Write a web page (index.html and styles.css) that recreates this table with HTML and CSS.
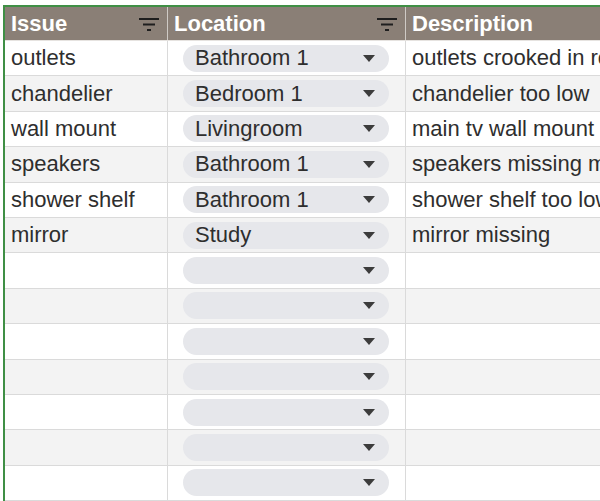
FILE: index.html
```html
<!DOCTYPE html>
<html>
<head>
<meta charset="utf-8">
<link rel="stylesheet" href="styles.css">
</head>
<body>
<div class="frame">
  <div class="sheet">
    <div class="row head">
      <div class="cell c1"><span>Issue</span>
        <svg class="filter" width="20" height="14" viewBox="0 0 20 14"><rect x="0" y="0" width="20" height="2"/><rect x="4" y="5.5" width="12" height="2"/><rect x="8" y="11" width="4" height="2"/></svg>
      </div>
      <div class="cell c2"><span>Location</span>
        <svg class="filter" width="20" height="14" viewBox="0 0 20 14"><rect x="0" y="0" width="20" height="2"/><rect x="4" y="5.5" width="12" height="2"/><rect x="8" y="11" width="4" height="2"/></svg>
      </div>
      <div class="cell c3"><span>Description</span></div>
    </div>

    <div class="row"><div class="cell c1">outlets</div><div class="cell c2"><div class="pill"><span>Bathroom 1</span><i class="arrow"></i></div></div><div class="cell c3">outlets crooked in restroom</div></div>
    <div class="row alt"><div class="cell c1">chandelier</div><div class="cell c2"><div class="pill"><span>Bedroom 1</span><i class="arrow"></i></div></div><div class="cell c3">chandelier too low</div></div>
    <div class="row"><div class="cell c1">wall mount</div><div class="cell c2"><div class="pill"><span>Livingroom</span><i class="arrow"></i></div></div><div class="cell c3">main tv wall mount</div></div>
    <div class="row alt"><div class="cell c1">speakers</div><div class="cell c2"><div class="pill"><span>Bathroom 1</span><i class="arrow"></i></div></div><div class="cell c3">speakers missing mount</div></div>
    <div class="row"><div class="cell c1">shower shelf</div><div class="cell c2"><div class="pill"><span>Bathroom 1</span><i class="arrow"></i></div></div><div class="cell c3">shower shelf too low</div></div>
    <div class="row alt"><div class="cell c1">mirror</div><div class="cell c2"><div class="pill"><span>Study</span><i class="arrow"></i></div></div><div class="cell c3">mirror missing</div></div>
    <div class="row"><div class="cell c1"></div><div class="cell c2"><div class="pill"><span></span><i class="arrow"></i></div></div><div class="cell c3"></div></div>
    <div class="row alt"><div class="cell c1"></div><div class="cell c2"><div class="pill"><span></span><i class="arrow"></i></div></div><div class="cell c3"></div></div>
    <div class="row"><div class="cell c1"></div><div class="cell c2"><div class="pill"><span></span><i class="arrow"></i></div></div><div class="cell c3"></div></div>
    <div class="row alt"><div class="cell c1"></div><div class="cell c2"><div class="pill"><span></span><i class="arrow"></i></div></div><div class="cell c3"></div></div>
    <div class="row"><div class="cell c1"></div><div class="cell c2"><div class="pill"><span></span><i class="arrow"></i></div></div><div class="cell c3"></div></div>
    <div class="row alt"><div class="cell c1"></div><div class="cell c2"><div class="pill"><span></span><i class="arrow"></i></div></div><div class="cell c3"></div></div>
    <div class="row"><div class="cell c1"></div><div class="cell c2"><div class="pill"><span></span><i class="arrow"></i></div></div><div class="cell c3"></div></div>
  </div>
</div>
</body>
</html>
```

FILE: styles.css
```css
html, body {
  margin: 0;
  padding: 0;
  background: #ffffff;
  overflow: hidden;
}
.frame {
  width: 600px;
  height: 501px;
  padding: 5px 0 0 3px;
  box-sizing: border-box;
  overflow: hidden;
}
.sheet {
  border-top: 2px solid #3f8f45;
  border-left: 2px solid #3f8f45;
  width: 700px;
  font-family: "Liberation Sans", Arial, sans-serif;
  font-size: 22px;
  color: #2e2e2e;
}
.row {
  display: grid;
  grid-template-columns: 163px 238px 1fr;
  height: 35.4px;
  box-sizing: border-box;
  border-bottom: 1px solid #dadada;
  background: #ffffff;
}
.row.alt {
  background: #f3f3f3;
}
.row.head {
  height: 34px;
  background: #8a7f76;
  color: #ffffff;
  font-weight: bold;
  border-bottom: 1px solid #e6e3e0;
}
.cell {
  display: flex;
  align-items: center;
  padding-left: 6px;
  border-right: 1px solid #dadada;
  white-space: nowrap;
  overflow: hidden;
  min-width: 0;
}
.head .cell {
  border-right: 1px solid #cfcac5;
  justify-content: space-between;
  padding-left: 6px;
  padding-right: 8px;
}
.head .c3 {
  justify-content: flex-start;
  border-right: none;
}
.c3 {
  border-right: none;
}
.filter {
  fill: #1e1e1e;
  flex: none;
  margin-top: 2px;
}
.c2 {
  padding-left: 15px;
  padding-right: 16px;
}
.pill {
  flex: 1;
  height: 27px;
  border-radius: 14px;
  background: #e6e7eb;
  display: flex;
  align-items: center;
  justify-content: space-between;
  padding: 0 14px 0 12px;
  box-sizing: border-box;
}
.arrow {
  width: 0;
  height: 0;
  border-left: 6.5px solid transparent;
  border-right: 6.5px solid transparent;
  border-top: 7px solid #3c3c3c;
}
```
